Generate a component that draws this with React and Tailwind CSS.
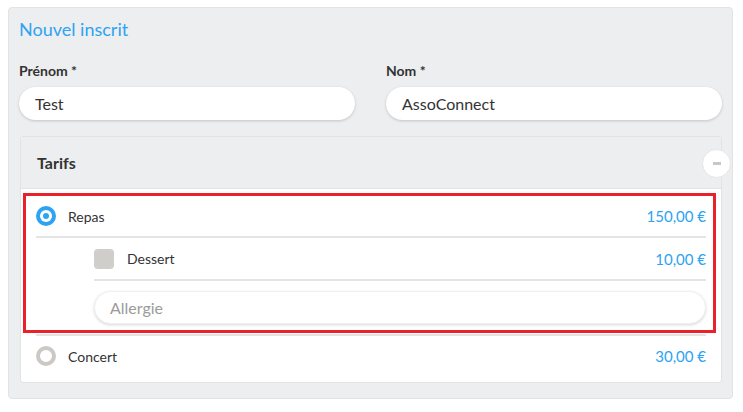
import React from 'react';

const Divider = ({ className = '' }) => <div className={`h-[2px] bg-[#e4e4e4] ${className}`} />;

const Radio = ({ checked }) =>
  checked ? (
    <span className="w-[20px] h-[20px] rounded-full bg-[#2ea3f2] flex items-center justify-center flex-shrink-0">
      <span className="w-[12px] h-[12px] rounded-full bg-white flex items-center justify-center">
        <span className="w-[6px] h-[6px] rounded-full bg-[#2ea3f2]" />
      </span>
    </span>
  ) : (
    <span className="w-[20px] h-[20px] rounded-full border-[4px] border-[#ccc9c5] bg-white flex-shrink-0" />
  );

const Field = ({ label, value }) => (
  <div className="flex flex-col">
    <label className="text-[14px] leading-[18px] font-bold text-[#333]">{label}</label>
    <div className="mt-[7px] h-[33px] rounded-full bg-white shadow-[0_1px_3px_rgba(0,0,0,0.18)] flex items-center px-[16px] text-[16px] text-[#333]">
      {value}
    </div>
  </div>
);

const Price = ({ children }) => <span className="text-[15px] text-[#2ea3f2]">{children}</span>;

export default function App() {
  return (
    <div className="pt-[7px] pl-[8px] bg-white min-h-screen" style={{ fontFamily: 'Lato, "Open Sans", sans-serif' }}>
      <div className="w-[725px] rounded-[4px] bg-[#edeef0] border border-[#e2e3e5] px-[10px] pt-[9px] pb-[15px]">
        <h2 className="text-[18px] leading-[24px] text-[#2ea3f2]">Nouvel inscrit</h2>

        <div className="grid grid-cols-2 gap-[31px] mt-[21px]">
          <Field label="Prénom *" value="Test" />
          <Field label="Nom *" value="AssoConnect" />
        </div>

        {/* tarifs card */}
        <div className="mt-[16px] ml-px border border-[#e2e3e5] rounded-[3px] bg-white">
          <div className="relative h-[52px] bg-[#edeef0] border-b border-[#e2e3e5] flex items-center px-[16px]">
            <span className="text-[16px] font-bold text-[#333]">Tarifs</span>
            <button className="absolute right-[-10px] top-[12px] w-[29px] h-[29px] rounded-full bg-white border border-[#e6e6e6] flex items-center justify-center">
              <span className="w-[8px] h-[3px] bg-[#c8c8c8]" />
            </button>
          </div>

          <div className="pt-[4px]">
            <div className="ml-[2px] mr-[5px] border-[3px] border-[#e8212b]">
              <div className="pl-[10px] pr-[7px]">
                <div className="h-[40px] flex items-center">
                  <Radio checked />
                  <span className="ml-[12px] text-[14px] text-[#333]">Repas</span>
                  <span className="ml-auto"><Price>150,00 €</Price></span>
                </div>
                <Divider />
                <div className="ml-[58px]">
                  <div className="h-[41px] flex items-center">
                    <span className="w-[20px] h-[20px] rounded-[4px] bg-[#d0cecb] flex-shrink-0" />
                    <span className="ml-[13px] text-[14px] text-[#333]">Dessert</span>
                    <span className="ml-auto"><Price>10,00 €</Price></span>
                  </div>
                  <Divider />
                  <div className="mt-[10px] h-[33px] rounded-full bg-white border border-[#f0f0f0] shadow-[0_1px_3px_rgba(0,0,0,0.16)] flex items-center px-[15px] text-[16px] text-[#9b9b9b]">
                    Allergie
                  </div>
                </div>
                <div className="h-[6px]" />
              </div>
            </div>

            <Divider className="mt-px mx-[15px]" />
            <div className="h-[40px] flex items-center px-[15px]">
              <Radio />
              <span className="ml-[12px] text-[14px] text-[#333]">Concert</span>
              <span className="ml-auto"><Price>30,00 €</Price></span>
            </div>
            <div className="h-[6px]" />
          </div>
        </div>
      </div>
    </div>
  );
}
